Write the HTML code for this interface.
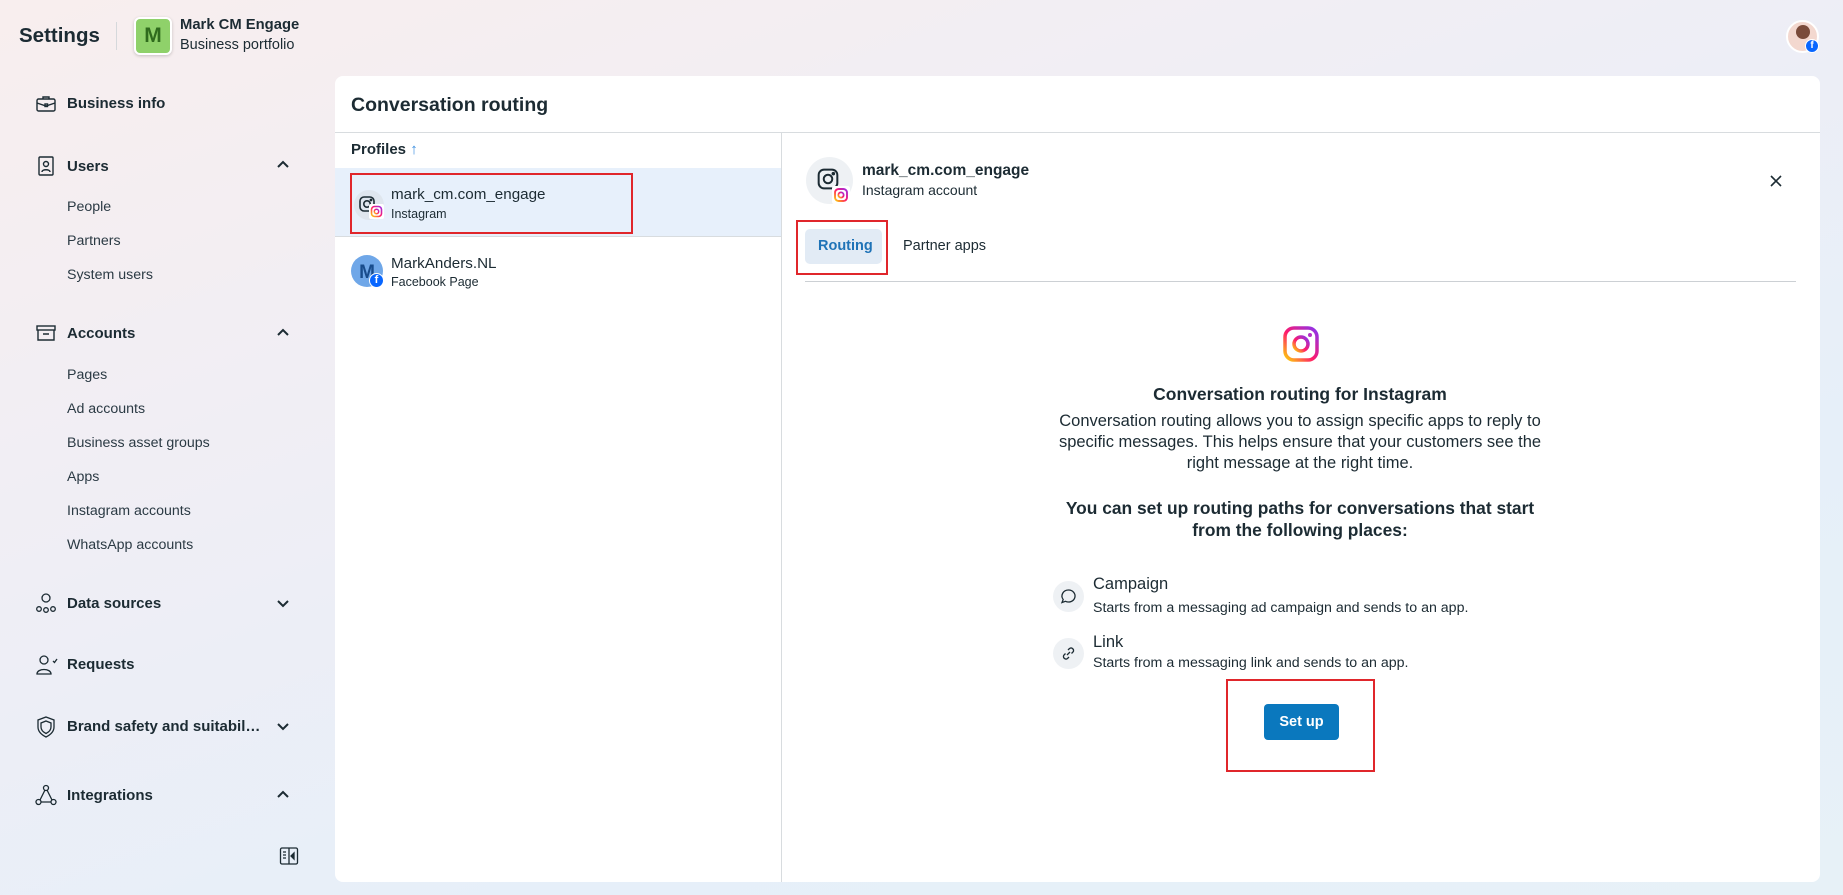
<!DOCTYPE html>
<html><head><meta charset="utf-8"><style>
*{margin:0;padding:0;box-sizing:border-box}
body{width:1843px;height:895px;overflow:hidden;position:relative;font-family:"Liberation Sans",sans-serif;color:#1c2b33;background:linear-gradient(160deg,#f8eeee 0%,#f1eef4 30%,#e6eff9 70%,#e7f1f7 100%)}
.a{position:absolute;white-space:nowrap}
.b{font-weight:bold}
.ni{font-size:15px;font-weight:bold;left:67px}
.si{font-size:14.2px;left:67px;color:#2b3a44}
.ic{position:absolute;left:35px}
.ch{position:absolute;left:276px}
</style></head><body>
<div class="a b" style="left:19px;top:24px;font-size:20.5px">Settings</div>
<div class="a" style="left:116px;top:22px;width:1px;height:28px;background:#d5d8db"></div>
<div class="a" style="left:134px;top:17px;width:38px;height:38px;border-radius:6px;background:#8fd16a;border:2px solid #fff;box-shadow:0 1px 3px rgba(0,0,0,.2);text-align:center;line-height:34px;font-weight:bold;font-size:21px;color:#2f6b1d">M</div>
<div class="a b" style="left:180px;top:17px;font-size:14.8px">Mark CM Engage</div>
<div class="a" style="left:180px;top:37px;font-size:14.5px">Business portfolio</div>
<div class="a" style="left:1786px;top:20px;width:33px;height:33px;border-radius:50%;background:#f3d8cf;border:2px solid #fff"><div style="position:absolute;left:8px;top:3px;width:14px;height:14px;border-radius:50%;background:#7a4b3a"></div><div style="position:absolute;left:17px;top:17px;width:14px;height:14px;border-radius:50%;background:#0866ff;border:1.5px solid #fff;color:#fff;font-size:10px;font-weight:bold;text-align:center;line-height:12px">f</div></div>

<svg class="ic" style="top:94px" width="22" height="20" viewBox="0 0 22 20" fill="none" stroke="#1c2b33" stroke-width="1.4"><rect x="2" y="5" width="18" height="12" rx="1.5"/><path d="M8 5V3h6v2M2 9l9 3 9-3"/><rect x="10" y="10" width="2.5" height="2.5"/></svg>
<div class="a ni" style="top:95px">Business info</div>
<svg class="ic" style="top:155px" width="22" height="22" viewBox="0 0 22 22" fill="none" stroke="#1c2b33" stroke-width="1.4"><rect x="4" y="2" width="14" height="18" rx="1"/><circle cx="11" cy="9" r="2.5"/><path d="M7 17c0-3 8-3 8 0"/></svg>
<div class="a ni" style="top:158px">Users</div>
<svg class="ch" style="top:160px" width="14" height="10" viewBox="0 0 14 10"><path d="M2 7l5-5 5 5" fill="none" stroke="#1c2b33" stroke-width="2"/></svg>
<div class="a si" style="top:199px">People</div>
<div class="a si" style="top:233px">Partners</div>
<div class="a si" style="top:267px">System users</div>
<svg class="ic" style="top:323px" width="22" height="20" viewBox="0 0 22 20" fill="none" stroke="#1c2b33" stroke-width="1.4"><rect x="2" y="3" width="18" height="4"/><path d="M3 7v10h16V7M8 11h6"/></svg>
<div class="a ni" style="top:325px">Accounts</div>
<svg class="ch" style="top:328px" width="14" height="10" viewBox="0 0 14 10"><path d="M2 7l5-5 5 5" fill="none" stroke="#1c2b33" stroke-width="2"/></svg>
<div class="a si" style="top:367px">Pages</div>
<div class="a si" style="top:401px">Ad accounts</div>
<div class="a si" style="top:435px">Business asset groups</div>
<div class="a si" style="top:469px">Apps</div>
<div class="a si" style="top:503px">Instagram accounts</div>
<div class="a si" style="top:537px">WhatsApp accounts</div>
<svg class="ic" style="top:592px" width="22" height="22" viewBox="0 0 22 22" fill="none" stroke="#1c2b33" stroke-width="1.3"><circle cx="11" cy="6" r="4"/><circle cx="4" cy="17" r="2.3"/><circle cx="11" cy="18" r="2.3"/><circle cx="18" cy="17" r="2.3"/></svg>
<div class="a ni" style="top:595px">Data sources</div>
<svg class="ch" style="top:598px" width="14" height="10" viewBox="0 0 14 10"><path d="M2 3l5 5 5-5" fill="none" stroke="#1c2b33" stroke-width="2"/></svg>
<svg class="ic" style="top:654px" width="24" height="22" viewBox="0 0 24 22" fill="none" stroke="#1c2b33" stroke-width="1.3"><circle cx="9" cy="6" r="4"/><path d="M2 20c0-6 14-6 14 0zM18 7l1.5 1.5L22 5"/></svg>
<div class="a ni" style="top:656px">Requests</div>
<svg class="ic" style="top:715px" width="22" height="24" viewBox="0 0 22 24" fill="none" stroke="#1c2b33" stroke-width="1.3"><path d="M11 2l8 3v7c0 5-4 8-8 10-4-2-8-5-8-10V5z"/><path d="M11 6l5 2v4c0 3-2 5-5 6.5-3-1.5-5-3.5-5-6.5V8z"/></svg>
<div class="a ni" style="top:718px">Brand safety and suitabil…</div>
<svg class="ch" style="top:721px" width="14" height="10" viewBox="0 0 14 10"><path d="M2 3l5 5 5-5" fill="none" stroke="#1c2b33" stroke-width="2"/></svg>
<svg class="ic" style="top:784px" width="22" height="22" viewBox="0 0 22 22" fill="none" stroke="#1c2b33" stroke-width="1.3"><circle cx="11" cy="4" r="2.5"/><circle cx="3.5" cy="18" r="2.5"/><circle cx="18.5" cy="18" r="2.5"/><path d="M10 6l-5 10M12 6l5 10M6 18h10"/></svg>
<div class="a ni" style="top:787px">Integrations</div>
<svg class="ch" style="top:790px" width="14" height="10" viewBox="0 0 14 10"><path d="M2 7l5-5 5 5" fill="none" stroke="#1c2b33" stroke-width="2"/></svg>
<svg class="a" style="left:279px;top:846px" width="20" height="20" viewBox="0 0 20 20" fill="none" stroke="#1c2b33" stroke-width="1.3"><rect x="1.5" y="2" width="17" height="16" rx="1.5"/><path d="M10 2v16M4 6h3M4 9h3M4 12h3"/><path d="M15 7l-3 3 3 3z" fill="#1c2b33"/></svg>

<div class="a" style="left:335px;top:76px;width:1485px;height:806px;background:#fff;border-radius:8px;overflow:hidden">
 <div class="a b" style="left:16px;top:18px;font-size:19.5px">Conversation routing</div>
 <div class="a" style="left:0;top:56px;width:1485px;height:1px;background:#d8dcdf"></div>
 <div class="a" style="left:446px;top:57px;width:1px;height:749px;background:#d8dcdf"></div>
 <div class="a b" style="left:16px;top:65px;font-size:15px">Profiles <span style="color:#3b8ee0;font-weight:normal">↑</span></div>
 <div class="a" style="left:0;top:92px;width:446px;height:68px;background:#e7f0fb"></div>
 <div class="a" style="left:0;top:160px;width:446px;height:1px;background:#d8dcdf"></div>
 <div class="a" style="left:15px;top:97px;width:283px;height:61px;border:2px solid #e0262b"></div>
 <div class="a" style="left:19px;top:114px;width:30px;height:30px;border-radius:50%;background:#dfe6ee"></div>
 <svg class="a" style="left:23px;top:119px" width="18" height="18" viewBox="0 0 18 18" fill="none" stroke="#1c2b33" stroke-width="1.6"><rect x="2" y="2" width="14" height="14" rx="4"/><circle cx="9" cy="9" r="3.2"/><circle cx="13" cy="5" r=".6" fill="#1c2b33"/></svg>
 <svg class="a" style="left:34px;top:128px" width="15" height="15" viewBox="0 0 15 15"><defs><linearGradient id="g1" x1="0" y1="1" x2="1" y2="0"><stop offset="0" stop-color="#fdd209"/><stop offset=".5" stop-color="#ff1a6b"/><stop offset="1" stop-color="#9a2ee8"/></linearGradient></defs><rect width="15" height="15" rx="2" fill="#fff"/><rect x="2.5" y="2.5" width="10" height="10" rx="3" fill="none" stroke="url(#g1)" stroke-width="1.6"/><circle cx="7.5" cy="7.5" r="2.2" fill="none" stroke="url(#g1)" stroke-width="1.5"/></svg>
 <div class="a" style="left:56px;top:110px;font-size:15.2px">mark_cm.com_engage</div>
 <div class="a" style="left:56px;top:131px;font-size:12.5px">Instagram</div>
 <div class="a" style="left:16px;top:179px;width:32px;height:32px;border-radius:50%;background:#6fa7e8;color:#184c8c;font-weight:bold;font-size:19px;text-align:center;line-height:36px">M</div>
 <div class="a" style="left:34px;top:197px;width:15px;height:15px;border-radius:50%;background:#0866ff;border:1.5px solid #fff;color:#fff;font-size:11px;font-weight:bold;text-align:center;line-height:13px">f</div>
 <div class="a" style="left:56px;top:179px;font-size:15.2px">MarkAnders.NL</div>
 <div class="a" style="left:56px;top:199px;font-size:12.5px">Facebook Page</div>

 <div class="a" style="left:471px;top:81px;width:47px;height:47px;border-radius:50%;background:#eef1f4"></div>
 <svg class="a" style="left:481px;top:91px" width="24" height="24" viewBox="0 0 18 18" fill="none" stroke="#1c2b33" stroke-width="1.5"><rect x="2" y="2" width="14" height="14" rx="4"/><circle cx="9" cy="9" r="3.2"/><circle cx="13" cy="5" r=".6" fill="#1c2b33"/></svg>
 <svg class="a" style="left:497px;top:110px" width="18" height="18" viewBox="0 0 15 15"><rect width="15" height="15" rx="2" fill="#fff"/><rect x="2.5" y="2.5" width="10" height="10" rx="3" fill="none" stroke="url(#g1)" stroke-width="1.6"/><circle cx="7.5" cy="7.5" r="2.2" fill="none" stroke="url(#g1)" stroke-width="1.5"/></svg>
 <div class="a b" style="left:527px;top:86px;font-size:15.5px">mark_cm.com_engage</div>
 <div class="a" style="left:527px;top:106px;font-size:14px">Instagram account</div>
 <svg class="a" style="left:1434px;top:98px" width="14" height="14" viewBox="0 0 14 14"><path d="M2 2l10 10M12 2L2 12" stroke="#1c2b33" stroke-width="1.6"/></svg>
 <div class="a" style="left:470px;top:153px;width:77px;height:35px;border-radius:5px;background:#e2ebf5"></div>
 <div class="a b" style="left:483px;top:162px;font-size:14.5px;color:#1f73b7">Routing</div>
 <div class="a" style="left:461px;top:144px;width:92px;height:55px;border:2px solid #e0262b"></div>
 <div class="a" style="left:568px;top:162px;font-size:14.5px">Partner apps</div>
 <div class="a" style="left:470px;top:205px;width:991px;height:1px;background:#ccd0d4"></div>

 <svg class="a" style="left:947px;top:249px" width="38" height="38" viewBox="0 0 38 38"><defs><linearGradient id="g2" x1="0" y1="1" x2="1" y2="0"><stop offset="0" stop-color="#fdd209"/><stop offset=".45" stop-color="#ff1a6b"/><stop offset="1" stop-color="#8a34f0"/></linearGradient></defs><rect x="3" y="3" width="32" height="32" rx="9" fill="none" stroke="url(#g2)" stroke-width="3.5"/><circle cx="19" cy="19" r="7" fill="none" stroke="url(#g2)" stroke-width="3.5"/><circle cx="28" cy="10" r="2" fill="#b533c7"/></svg>
 <div class="a b" style="left:665px;width:600px;text-align:center;top:308px;font-size:17.5px">Conversation routing for Instagram</div>
 <div class="a" style="left:665px;width:600px;text-align:center;top:335px;font-size:16.5px;line-height:21px;white-space:normal">Conversation routing allows you to assign specific apps to reply to<br>specific messages. This helps ensure that your customers see the<br>right message at the right time.</div>
 <div class="a b" style="left:615px;width:700px;text-align:center;top:421px;font-size:17.4px;line-height:22px;white-space:normal">You can set up routing paths for conversations that start<br>from the following places:</div>

 <div class="a" style="left:718px;top:505px;width:31px;height:31px;border-radius:50%;background:#eef1f4"></div>
 <svg class="a" style="left:725px;top:512px" width="17" height="17" viewBox="0 0 17 17" fill="none" stroke="#1c2b33" stroke-width="1.3"><path d="M8.5 2a6.5 6 0 1 1-3 11.3L2 14.5l1.2-3A6.5 6 0 0 1 8.5 2z"/></svg>
 <div class="a" style="left:758px;top:499px;font-size:16.5px">Campaign</div>
 <div class="a" style="left:758px;top:524px;font-size:14.2px">Starts from a messaging ad campaign and sends to an app.</div>
 <div class="a" style="left:718px;top:562px;width:31px;height:31px;border-radius:50%;background:#eef1f4"></div>
 <svg class="a" style="left:725px;top:569px" width="17" height="17" viewBox="0 0 17 17" fill="none" stroke="#1c2b33" stroke-width="1.3"><path d="M7 10l3-3M8 5l1.5-1.5a2.5 2.5 0 0 1 3.5 3.5L11.5 8.5M9 12l-1.5 1.5a2.5 2.5 0 0 1-3.5-3.5L5.5 8.5"/></svg>
 <div class="a" style="left:758px;top:557px;font-size:16.5px">Link</div>
 <div class="a" style="left:758px;top:579px;font-size:14.2px">Starts from a messaging link and sends to an app.</div>
 <div class="a" style="left:891px;top:603px;width:149px;height:93px;border:2px solid #e0262b"></div>
 <div class="a b" style="left:929px;top:628px;width:75px;height:36px;border-radius:4px;background:#0a78be;color:#fff;font-size:14.5px;text-align:center;line-height:36px">Set up</div>
</div>
</body></html>
